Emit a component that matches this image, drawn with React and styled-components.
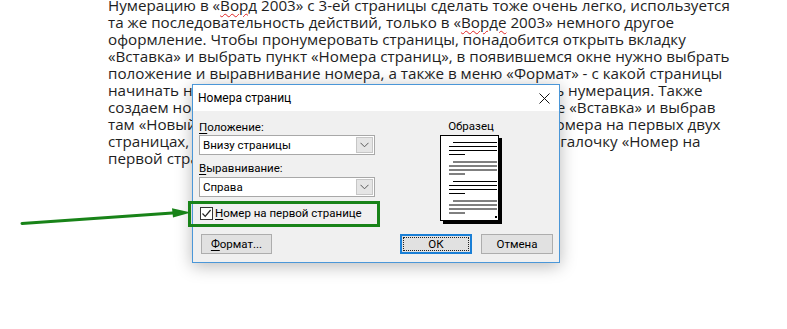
import React from "react";
import styled, { createGlobalStyle } from "styled-components";

const GlobalStyle = createGlobalStyle`
  html, body {
    margin: 0;
    padding: 0;
    background: #fff;
  }
  body {
    width: 787px;
    height: 329px;
    overflow: hidden;
  }
`;

const Screen = styled.div`
  position: relative;
  width: 787px;
  height: 329px;
  overflow: hidden;
  background: #fff;
`;

const Article = styled.div`
  margin-top: -3px;
  padding-left: 108px;
  font-family: "Open Sans", sans-serif;
  font-size: 15.2px;
  line-height: 17px;
  color: #1e1e1e;
`;

const Line = styled.div`
  white-space: nowrap;
`;

const Typo = styled.span`
  text-decoration: underline wavy #e02424;
  text-decoration-thickness: 1px;
  text-underline-offset: 2px;
`;

const Dialog = styled.div`
  position: absolute;
  left: 192px;
  top: 84px;
  width: 368px;
  height: 179px;
  box-sizing: border-box;
  border: 1px solid #4b97d8;
  background: #f0f0f0;
  box-shadow: 0 3px 16px rgba(0, 0, 0, 0.28);
  display: flex;
  flex-direction: column;
  font-family: Roboto, "Noto Sans", sans-serif;
  font-size: 11.5px;
  color: #000;
`;

const TitleBar = styled.div`
  height: 26px;
  flex: none;
  background: #fff;
  display: flex;
  align-items: center;
  justify-content: space-between;
  padding: 0 9px 0 5px;
  font-size: 12px;
`;

const Body = styled.div`
  flex: 1;
  display: flex;
  flex-direction: column;
  padding: 9px 6px 8px 6px;
`;

const Top = styled.div`
  display: grid;
  grid-template-columns: 176px 80px;
  column-gap: 56px;
`;

const Column = styled.div`
  display: flex;
  flex-direction: column;
  align-items: ${(p) => (p.$center ? "center" : "stretch")};
`;

const Label = styled.div`
  line-height: 15px;
  margin-top: ${(p) => p.$gap || 0}px;
`;

const Key = styled.span`
  text-decoration: underline;
  text-underline-offset: 2px;
`;

const Combo = styled.div`
  height: 20px;
  box-sizing: border-box;
  margin-top: ${(p) => p.$gap || 0}px;
  border: 1px solid #a8a8a8;
  background: #fff;
  display: flex;
  align-items: center;
  padding: 1px;
`;

const ComboText = styled.span`
  flex: 1;
  padding-left: 2px;
`;

const ComboButton = styled.div`
  width: 17px;
  height: 16px;
  box-sizing: border-box;
  border: 1px solid #c6c6c6;
  background: #e5e5e5;
  display: flex;
  align-items: center;
  justify-content: center;
`;

const CheckRow = styled.div`
  margin-top: 9px;
  display: flex;
  align-items: center;
  gap: 2px;
  line-height: 15px;
  padding-left: 1px;
`;

const CheckBox = styled.div`
  width: 13px;
  height: 13px;
  box-sizing: border-box;
  border: 1px solid #333;
  background: #fff;
  display: flex;
  align-items: center;
  justify-content: center;
`;

const PreviewLabel = styled.div`
  line-height: 13px;
`;

const PageDrawing = styled.svg`
  margin-top: 2px;
  display: block;
`;

const ButtonRow = styled.div`
  margin-top: auto;
  display: flex;
  gap: 9px;
  padding-left: 2px;
`;

const Button = styled.div`
  width: ${(p) => p.$w || 72}px;
  height: 20px;
  box-sizing: border-box;
  margin-right: ${(p) => (p.$push ? "auto" : "0")};
  border: 1px solid ${(p) => (p.$primary ? "#1a7fd6" : "#adadad")};
  background: #e1e1e1;
  display: flex;
  align-items: center;
  justify-content: center;
  position: relative;

  ${(p) =>
    p.$primary &&
    `
    box-shadow: inset 0 0 0 1px #1a7fd6;
    &::after {
      content: "";
      position: absolute;
      inset: 2px;
      border: 1px dotted #222;
    }
  `}
`;

const Highlight = styled.div`
  position: absolute;
  left: 188px;
  top: 201px;
  width: 192px;
  height: 26px;
  box-sizing: border-box;
  border: 3px solid #188318;
`;

const Arrow = styled.svg`
  position: absolute;
  left: 0;
  top: 200px;
`;

const Chevron = () => (
  <svg width="9" height="6" viewBox="0 0 9 6">
    <path d="M0.5 0.8 L4.5 4.8 L8.5 0.8" fill="none" stroke="#5a5a5a" strokeWidth="1" />
  </svg>
);

const paragraphs = [7, 26.5, 46, 65.5];

const Preview = () => (
  <PageDrawing width="62" height="89" viewBox="0 0 62 89">
    <rect x="3" y="3" width="59" height="86" fill="#000" />
    <rect x="0.5" y="0.5" width="58" height="85" fill="#fff" stroke="#000" />
    {paragraphs.map((y) => (
      <g key={y} stroke="#000" strokeWidth="1">
        <line x1="13" y1={y + 0.5} x2="57" y2={y + 0.5} />
        <line x1="9" y1={y + 4.5} x2="57" y2={y + 4.5} />
        <line x1="9" y1={y + 8.5} x2="57" y2={y + 8.5} />
        <line x1="9" y1={y + 12.5} x2="25" y2={y + 12.5} />
      </g>
    ))}
    <rect x="55" y="81" width="2" height="2" fill="#000" />
  </PageDrawing>
);

export default function App() {
  return (
    <Screen>
      <GlobalStyle />
      <Article>
        <Line>
          Нумерацию в «<Typo>Ворд</Typo> 2003» с 3-ей страницы сделать тоже очень легко, используется
        </Line>
        <Line>
          та же последовательность действий, только в «<Typo>Ворде</Typo> 2003» немного другое
        </Line>
        <Line>оформление. Чтобы пронумеровать страницы, понадобится открыть вкладку</Line>
        <Line>«Вставка» и выбрать пункт «Номера страниц», в появившемся окне нужно выбрать</Line>
        <Line>положение и выравнивание номера, а также в меню «Формат» - с какой страницы</Line>
        <Line>начинать нумерацию и в каком месте страницы будет стоять нумерация. Также</Line>
        <Line>создаем новый раздел, для чего снова переходим во вкладке «Вставка» и выбрав</Line>
        <Line>там «Новый раздел» со следующей страницы, чтоб убрать номера на первых двух</Line>
        <Line>страницах, в разделе «Формат» нужно будет просто удалить галочку «Номер на</Line>
        <Line>первой странице».</Line>
      </Article>

      <Dialog>
        <TitleBar>
          <span>Номера страниц</span>
          <svg width="11" height="11" viewBox="0 0 11 11">
            <path d="M0.5 0.5 L10.5 10.5 M10.5 0.5 L0.5 10.5" stroke="#111" strokeWidth="1" />
          </svg>
        </TitleBar>
        <Body>
          <Top>
            <Column>
              <Label>
                <Key>П</Key>оложение:
              </Label>
              <Combo>
                <ComboText>Внизу страницы</ComboText>
                <ComboButton>
                  <Chevron />
                </ComboButton>
              </Combo>
              <Label $gap={6}>
                <Key>В</Key>ыравнивание:
              </Label>
              <Combo $gap={1}>
                <ComboText>Справа</ComboText>
                <ComboButton>
                  <Chevron />
                </ComboButton>
              </Combo>
              <CheckRow>
                <CheckBox>
                  <svg width="11" height="11" viewBox="0 0 11 11">
                    <path d="M1.5 5.5 L4.2 8.4 L9.6 2" fill="none" stroke="#222" strokeWidth="1.2" />
                  </svg>
                </CheckBox>
                <span>
                  <Key>Н</Key>омер на первой странице
                </span>
              </CheckRow>
            </Column>
            <Column $center>
              <PreviewLabel>Образец</PreviewLabel>
              <Preview />
            </Column>
          </Top>
          <ButtonRow>
            <Button $w={71} $push>
              <span>
                <Key>Ф</Key>ормат...
              </span>
            </Button>
            <Button $primary>ОК</Button>
            <Button>Отмена</Button>
          </ButtonRow>
        </Body>
      </Dialog>

      <Highlight />
      <Arrow width="195" height="30" viewBox="0 0 195 30">
        <line x1="22" y1="23.5" x2="176" y2="12.8" stroke="#188318" strokeWidth="3" strokeLinecap="round" />
        <polygon points="172,8.2 191,12.6 173,17.6" fill="#188318" />
      </Arrow>
    </Screen>
  );
}
